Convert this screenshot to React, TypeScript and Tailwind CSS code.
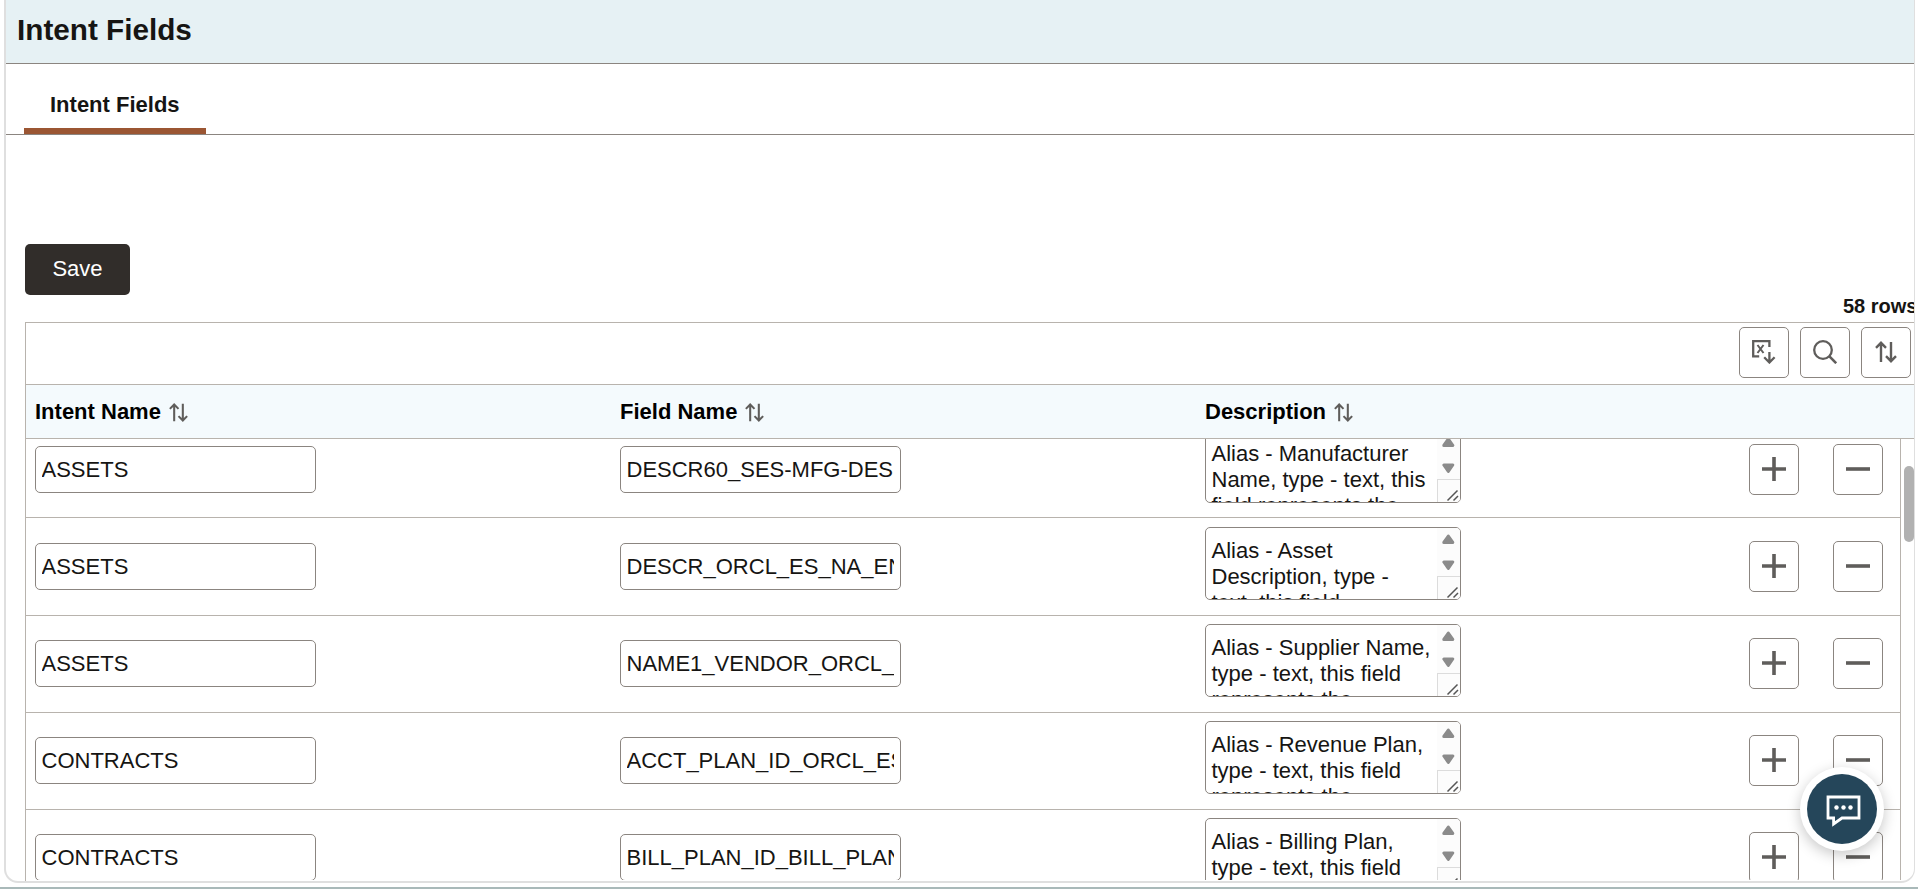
import clsx from 'clsx';

interface IntentRow {
  intent: string;
  field: string;
  description: string;
}

const rows: IntentRow[] = [
  {
    intent: 'ASSETS',
    field: 'DESCR60_SES-MFG-DES',
    description: 'Alias - Manufacturer Name, type - text, this field represents the',
  },
  {
    intent: 'ASSETS',
    field: 'DESCR_ORCL_ES_NA_EN',
    description: 'Alias - Asset Description, type - text, this field',
  },
  {
    intent: 'ASSETS',
    field: 'NAME1_VENDOR_ORCL_',
    description: 'Alias - Supplier Name, type - text, this field represents the',
  },
  {
    intent: 'CONTRACTS',
    field: 'ACCT_PLAN_ID_ORCL_ES',
    description: 'Alias - Revenue Plan, type - text, this field represents the',
  },
  {
    intent: 'CONTRACTS',
    field: 'BILL_PLAN_ID_BILL_PLAN',
    description: 'Alias - Billing Plan, type - text, this field represents the',
  },
];

const SortIcon = ({ className }: { className?: string }) => (
  <svg viewBox="0 0 22 22" fill="none" stroke="#5f5d5b" strokeWidth="2.4" className={className}>
    <path d="M6 21V2M1 6.8l5-5 5 5M16 1v19M11 15.2l5 5 5-5" />
  </svg>
);

const ExportIcon = () => (
  <svg width="24" height="24" viewBox="0 0 24 24" fill="none" stroke="#5f5d5b" strokeWidth="2.3" className="-mt-px">
    <path d="M17.4 7V1.2H1.2V16.4h6" />
    <path d="M5.5 5l6 8M11.5 5l-6 8" strokeWidth="2" />
    <path d="M17.4 12v10.5M12.2 17.3l5.2 5.2 5.2-5.2" />
  </svg>
);

const SearchIcon = () => (
  <svg width="24" height="24" viewBox="0 0 24 24" fill="none" stroke="#5f5d5b" strokeWidth="2.3" className="-mt-px">
    <circle cx="10" cy="10" r="8.8" />
    <path d="M16.2 16.2l7 7" strokeWidth="2.6" />
  </svg>
);

const ToolButton = ({ children }: { children: React.ReactNode }) => (
  <button className="flex h-[51px] w-[50px] shrink-0 items-center justify-center rounded-[5px] border border-[#8b8580] bg-white">
    {children}
  </button>
);

const ColumnHeader = ({ label, className }: { label: string; className: string }) => (
  <div className={clsx('flex shrink-0 items-center', className)}>
    <span>{label}</span>
    <SortIcon className="ml-2 mt-px size-[19px]" />
  </div>
);

const TextField = ({ value }: { value: string }) => (
  <div className="mt-4 h-[47px] w-[281px] rounded-[5px] border border-[#8b8580] bg-white pt-[10.1px] pr-[6px] pl-[5.5px]">
    <div className="overflow-hidden leading-[26px] whitespace-nowrap">{value}</div>
  </div>
);

const TextArea = ({ value }: { value: string }) => (
  <div className="flex h-[73px] w-[256px] overflow-hidden rounded-[5px] border border-[#8b8580] bg-white">
    <div className="w-[231px] shrink-0 pt-[10.1px] pr-[2px] pl-[5.5px] leading-[26px]">{value}</div>
    <div className="flex w-[23px] shrink-0 flex-col bg-[#fcfcfc]">
      <svg width="23" height="48" viewBox="0 0 23 48" fill="#8b8b8b" stroke="#8b8b8b" strokeWidth="3" strokeLinejoin="round">
        <path d="M11.3 8l4.5 6.4h-9z" />
        <path d="M11.3 40.4l4.5-6.4h-9z" />
      </svg>
      <div className="h-[23px] border-t border-l border-[#dcdcdc]">
        <svg width="22" height="22" viewBox="0 0 22 22" stroke="#555" strokeWidth="1.5">
          <path d="M9.5 20.5l10-10M15.5 20.5l4.5-4.5" />
        </svg>
      </div>
    </div>
  </div>
);

const GridRow = ({ row }: { row: IntentRow }) => (
  <div className="flex h-[97.2px] shrink-0 items-start border-b border-[#b8b3ad] pt-[8.4px] pl-[9px]">
    <div className="w-[585px] shrink-0">
      <TextField value={row.intent} />
    </div>
    <div className="w-[585px] shrink-0">
      <TextField value={row.field} />
    </div>
    <div className="w-[544px] shrink-0">
      <TextArea value={row.description} />
    </div>
    <div className="flex gap-[34px] pt-[14px]">
      <ToolButton>
        <svg width="24" height="24" viewBox="0 0 24 24" stroke="#5f5d5b" strokeWidth="3.6" className="-mt-px">
          <path d="M0 12h24M12 0v24" />
        </svg>
      </ToolButton>
      <ToolButton>
        <svg width="24" height="24" viewBox="0 0 24 24" stroke="#5f5d5b" strokeWidth="3.6" className="-mt-px">
          <path d="M0 12h24" />
        </svg>
      </ToolButton>
    </div>
  </div>
);

const ChatButton = () => (
  <button className="absolute top-[767px] left-[1800px] flex size-[84px] items-center justify-center rounded-full bg-white shadow-[0_4px_14px_rgba(0,0,0,0.22)]">
    <span className="flex size-[70px] items-center justify-center rounded-full bg-[#25465a]">
      <svg width="36" height="32" viewBox="0 0 36 32" className="mt-1 ml-1" fill="none" stroke="#fff" strokeWidth="2.8">
        <path d="M2 2h31v21H16l-8.4 6v-6H2z" />
        <g fill="#fff" stroke="none">
          <circle cx="10.5" cy="12.5" r="2.2" />
          <circle cx="17.5" cy="12.5" r="2.2" />
          <circle cx="24.5" cy="12.5" r="2.2" />
        </g>
      </svg>
    </span>
  </button>
);

const App = () => {
  return (
    <div className="relative flex h-[889px] w-[1918px] flex-col overflow-hidden bg-white font-['Liberation_Sans',Arial,sans-serif] text-[22px] text-[#161513]">
      <main className="ml-[4px] flex h-[883px] w-[1911px] shrink-0 flex-col overflow-hidden rounded-b-[14px] border-r border-b-2 border-l-2 border-[#dfdfdf]">
        <header className="h-16 shrink-0 border-b border-[#8b8580] bg-[#e6f1f4] pt-[13px] pl-[11px]">
          <h1 className="text-[29.7px] leading-[34px] font-bold">Intent Fields</h1>
        </header>

        {/* Tabs */}
        <nav className="flex h-[71px] shrink-0 items-end border-b border-[#8b8580] pl-[18px]">
          <div className="h-[48px] w-[182px] border-b-[6px] border-[#9b5633] pt-[6px] pl-[26px] leading-[26px] font-bold">
            Intent Fields
          </div>
        </nav>

        <section className="flex min-h-0 flex-1 flex-col pt-[109px] pl-[19px]">
          <button className="h-[51px] w-[105px] shrink-0 rounded-[5px] bg-[#312d2a] pb-[3px] text-white">Save</button>

          <div className="h-[27px] shrink-0 overflow-hidden pl-[1818px] text-[20px] leading-[23px] font-bold whitespace-nowrap">
            58 rows
          </div>

          <div className="flex min-h-0 flex-1 flex-col border-t border-l border-[#b8b3ad]">
            <div className="flex h-[62px] shrink-0 justify-end gap-[11px] border-b border-[#b8b3ad] pt-[4px] pr-[3px]">
              <ToolButton>
                <ExportIcon />
              </ToolButton>
              <ToolButton>
                <SearchIcon />
              </ToolButton>
              <ToolButton>
                <SortIcon className="-mt-px size-[22px]" />
              </ToolButton>
            </div>

            <div className="flex h-[54px] shrink-0 items-center border-b border-[#b8b3ad] bg-[#f4fafd] pl-[9px] font-bold text-black">
              <ColumnHeader label="Intent Name" className="w-[585px]" />
              <ColumnHeader label="Field Name" className="w-[585px]" />
              <ColumnHeader label="Description" className="w-[400px]" />
            </div>

            <div className="flex min-h-0 flex-1">
              <div className="mb-px flex w-[1875px] shrink-0 flex-col overflow-hidden border-r border-[#b8b3ad]">
                <div className="-mt-[17.8px] flex flex-col">
                  {rows.map((row, i) => (
                    <GridRow key={i} row={row} />
                  ))}
                </div>
              </div>
              <div className="flex-1 pt-[27px] pl-[3px]">
                <div className="h-[76px] w-[10px] rounded-full bg-[#b1b1b1]" />
              </div>
            </div>
          </div>
        </section>
      </main>

      <div className="mt-auto h-[2px] shrink-0 bg-[#a9b9b9]" />
      <ChatButton />
    </div>
  );
};

export default App;
